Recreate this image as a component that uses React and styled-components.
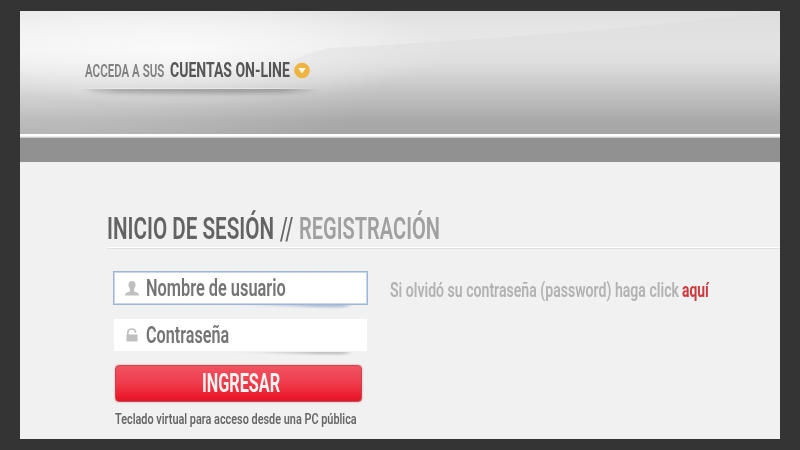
import React, { useLayoutEffect, useRef, useState } from "react";
import styled, { createGlobalStyle, css } from "styled-components";

const GlobalStyle = createGlobalStyle`
  * { box-sizing: border-box; }
  html, body { margin: 0; padding: 0; }
  body { background: #343434; overflow: hidden; font-family: Roboto, "Liberation Sans", sans-serif; }
`;

/* ---------- condensed type ---------- */

const TextSlot = styled.span`
  display: block;
  flex: none;
  width: ${(p) => p.$width}px;
  height: ${(p) => p.$size}px;
  line-height: ${(p) => p.$size}px;
  font-size: ${(p) => p.$size}px;
  font-weight: ${(p) => p.$weight || 600};
  color: ${(p) => p.$color};
  white-space: nowrap;
`;

const Glyphs = styled.span`
  display: inline-block;
  transform-origin: 0 50%;
`;

function Condensed({ width, size, weight, color, children, ...rest }) {
  const ref = useRef(null);
  const [scale, setScale] = useState(1);
  useLayoutEffect(() => {
    const natural = ref.current.offsetWidth;
    if (natural) setScale(width / natural);
  }, [width, size, children]);
  return (
    <TextSlot $width={width} $size={size} $weight={weight} $color={color} {...rest}>
      <Glyphs ref={ref} style={{ transform: `scaleX(${scale})` }}>{children}</Glyphs>
    </TextSlot>
  );
}

/* ---------- page frame ---------- */

const Page = styled.div`
  height: 450px;
  padding: 11px 20px;
  background: #343434;
`;

const Panel = styled.main`
  height: 428px;
  background: #f1f1f1;
  overflow: hidden;
`;

const Header = styled.header`
  height: 123px;
  padding: 50px 0 0 50px;
  position: relative;
  background:
    radial-gradient(ellipse 270px 56px at 160px 38px, rgba(255,255,255,.72), rgba(255,255,255,.38) 50%, rgba(255,255,255,0)),
    radial-gradient(ellipse 380px 140px at 0 40px, rgba(255,255,255,.42), rgba(255,255,255,.2) 55%, rgba(255,255,255,0)),
    linear-gradient(180deg, #dfdfdf 0, #e5e5e5 15px, #e8e8e8 38px, #e0e0e0 51px, #cecece 69px, #bababa 91px, #a9a9a9 110px, #a6a6a6 123px);
`;

const Sweep = styled.svg`
  position: absolute;
  inset: 0;
`;

const AccountLink = styled.a`
  position: relative;
  display: flex;
  width: 250px;
  height: 28px;
  padding: 0 0 0 15px;
  text-decoration: none;
`;

const LinkLead = styled(Condensed)`
  margin: 2px 6px 0 0;
`;

const LinkMain = styled(Condensed)`
  margin: -1px 4px 0 0;
`;

const LinkShadow = styled.svg`
  position: absolute;
  left: 0;
  top: 26px;
`;

const Arrow = styled.svg`
  margin-top: 1px;
  flex: none;
`;

const Rule = styled.div`
  height: 4px;
  background: linear-gradient(#fff 0 2px, #eee 2px 3px, #cdcdcd 3px);
`;

const NavBar = styled.nav`
  height: 24px;
  background: #919191;
`;

/* ---------- content ---------- */

const Content = styled.section`
  padding: 50px 0 0 87px;
`;

const Title = styled.h1`
  display: flex;
  margin: 0;
  height: 37px;
  border-bottom: 1px solid #e0e0e0;
  box-shadow: inset 0 -1px #fff;
`;

const TitlePart = styled(Condensed)`
  margin-right: 6px;
`;

const Columns = styled.div`
  display: flex;
  padding: 22px 0 0 6px;
`;

const Form = styled.form`
  width: 255px;
`;

const Field = styled.label`
  position: relative;
  display: flex;
  align-items: center;
  width: 255px;
  height: 34px;
  padding-left: 11px;
  border: 1px solid transparent;
  background: #fff;
  background-clip: padding-box;
  ${(p) => p.$active && css`
    border: 1px solid #9eb6da;
    background-clip: border-box;
    box-shadow: inset 0 0 0 1px #c9d7ec;
  `}
  & + & { margin-top: 13px; }
`;

const FieldIcon = styled.svg`
  width: 14px;
  height: 17px;
  margin-right: 7px;
  flex: none;
  fill: #bfbfbf;
`;

const FieldShade = styled.svg`
  position: absolute;
  left: 110px;
  top: 32px;
`;

const Submit = styled.button`
  display: flex;
  justify-content: center;
  align-items: center;
  width: 247px;
  height: 37px;
  margin: 13px 0 0 2px;
  padding: 0 0 0 5px;
  border: 1px solid #cb4551;
  border-radius: 4px;
  background: linear-gradient(#f15361, #ef3b4b 50%, #ec162a 92%, #d91c2d);
  box-shadow: 0 0 2px rgba(160, 60, 70, .55);
  font-family: inherit;
`;

const Keyboard = styled(Condensed)`
  margin: 10px 0 0 2px;
`;

const Help = styled.div`
  display: flex;
  padding: 9px 0 0 22px;
`;

const HelpText = styled(Condensed)`
  margin-right: 3px;
`;

function Shade({ color }) {
  return (
    <FieldShade width="135" height="9" aria-hidden="true">
      <defs>
        <linearGradient id={`s${color.slice(1)}`}>
          <stop offset="0" stopColor={color} stopOpacity="0" />
          <stop offset=".7" stopColor={color} stopOpacity=".55" />
          <stop offset=".9" stopColor={color} stopOpacity=".5" />
          <stop offset="1" stopColor={color} stopOpacity="0" />
        </linearGradient>
        <filter id={`b${color.slice(1)}`} x="-5%" y="-50%" width="110%" height="220%">
          <feGaussianBlur stdDeviation="1.1" />
        </filter>
        <clipPath id={`c${color.slice(1)}`}><rect y="1" width="135" height="8" /></clipPath>
      </defs>
      <g clipPath={`url(#c${color.slice(1)})`}>
        <path d="M0 0H132L123 3Q90 4 0 0Z" fill={`url(#s${color.slice(1)})`} filter={`url(#b${color.slice(1)})`} />
      </g>
    </FieldShade>
  );
}

export default function App() {
  return (
    <Page>
      <GlobalStyle />
      <Panel>
        <Header>
          <Sweep width="760" height="123" aria-hidden="true">
            <defs>
              <linearGradient id="sweep" x1="0" y1="0" x2="0" y2="1">
                <stop offset="0" stopColor="#d4d4d4" stopOpacity=".25" />
                <stop offset=".5" stopColor="#d4d4d4" stopOpacity=".3" />
                <stop offset="1" stopColor="#d8d8d8" stopOpacity="0" />
              </linearGradient>
            </defs>
            <path d="M240 75Q275 42 310 37Q560 24 760 0V75Z" fill="url(#sweep)" />
          </Sweep>
          <AccountLink href="#">
            <LinkShadow width="252" height="22" aria-hidden="true">
              <defs>
                <linearGradient id="edge">
                  <stop offset="0" stopColor="#777" stopOpacity="0" />
                  <stop offset=".18" stopColor="#777" stopOpacity=".55" />
                  <stop offset=".85" stopColor="#777" stopOpacity=".65" />
                  <stop offset="1" stopColor="#777" stopOpacity="0" />
                </linearGradient>
                <linearGradient id="lip" gradientUnits="userSpaceOnUse" x1="0" y1="0" x2="250" y2="0">
                  <stop offset="0" stopColor="#eee" stopOpacity="0" />
                  <stop offset=".2" stopColor="#eee" stopOpacity=".7" />
                  <stop offset=".8" stopColor="#eee" stopOpacity=".6" />
                  <stop offset="1" stopColor="#eee" stopOpacity="0" />
                </linearGradient>
                <filter id="soft" x="-5%" y="-100%" width="110%" height="320%"><feGaussianBlur stdDeviation="2.4" /></filter>
                <clipPath id="below"><rect y="2" width="252" height="20" /></clipPath>
              </defs>
              <g clipPath="url(#below)">
                <path d="M2 -2H250L242 5Q120 8 24 5Z" fill="url(#edge)" filter="url(#soft)" />
              </g>
              <path d="M5 1H247V2H5Z" fill="url(#lip)" />
            </LinkShadow>
            <LinkLead width={79} size={17.5} weight={600} color="#808080">ACCEDA A SUS</LinkLead>
            <LinkMain width={120} size={21} weight={700} color="#555">CUENTAS ON-LINE</LinkMain>
            <Arrow width="16" height="17" viewBox="0 0 16 17">
              <circle cx="8" cy="8.5" r="7.8" fill="#efb341" />
              <path d="M4.2 6H11.8L8 11.5Z" fill="#fffbe9" />
            </Arrow>
          </AccountLink>
        </Header>
        <Rule />
        <NavBar />
        <Content>
          <Title>
            <TitlePart width={167} size={32} color="#636363">INICIO DE SESIÓN</TitlePart>
            <TitlePart width={13} size={32} weight={500} color="#686868">//</TitlePart>
            <TitlePart width={141} size={32} color="#a0a0a0">REGISTRACIÓN</TitlePart>
          </Title>
          <Columns>
            <Form>
              <Field $active>
                <FieldIcon viewBox="0 0 14 17">
                  <path d="M7 1C4.4 1 3.3 2.8 3.5 5.2C3.7 7.3 4.5 8.7 5 9.3V11.1C4.6 12.2 1 12.2.2 14.2V15.5H13.8V14.2C13 12.2 9.4 12.2 9 11.1V9.3C9.5 8.7 10.3 7.3 10.5 5.2C10.7 2.8 9.6 1 7 1Z" />
                </FieldIcon>
                <Condensed width={140} size={23} color="#747474">Nombre de usuario</Condensed>
                <Shade color="#7188bb" />
              </Field>
              <Field>
                <FieldIcon viewBox="0 0 14 17">
                  <path d="M1.5 7.5H12.5V14.5H1.5ZM2 7.5V5Q2.5 1.2 6.8 1.2Q11 1.2 11.3 5V5.7H9.7V5Q9.3 2.7 6.8 2.7Q4 2.7 3.7 5V7.5Z" />
                </FieldIcon>
                <Condensed width={83} size={23} color="#747474">Contraseña</Condensed>
                <Shade color="#8c8c8c" />
              </Field>
              <Submit type="button">
                <Condensed width={78} size={25} weight={700} color="#fff4f1">INGRESAR</Condensed>
              </Submit>
              <Keyboard width={242} size={15} color="#666">Teclado virtual para acceso desde una PC pública</Keyboard>
            </Form>
            <Help>
              <HelpText width={289} size={20} color="#b2b2b2">Si olvidó su contraseña (password) haga click</HelpText>
              <Condensed width={27} size={20} weight={700} color="#d2393c">aquí</Condensed>
            </Help>
          </Columns>
        </Content>
      </Panel>
    </Page>
  );
}
